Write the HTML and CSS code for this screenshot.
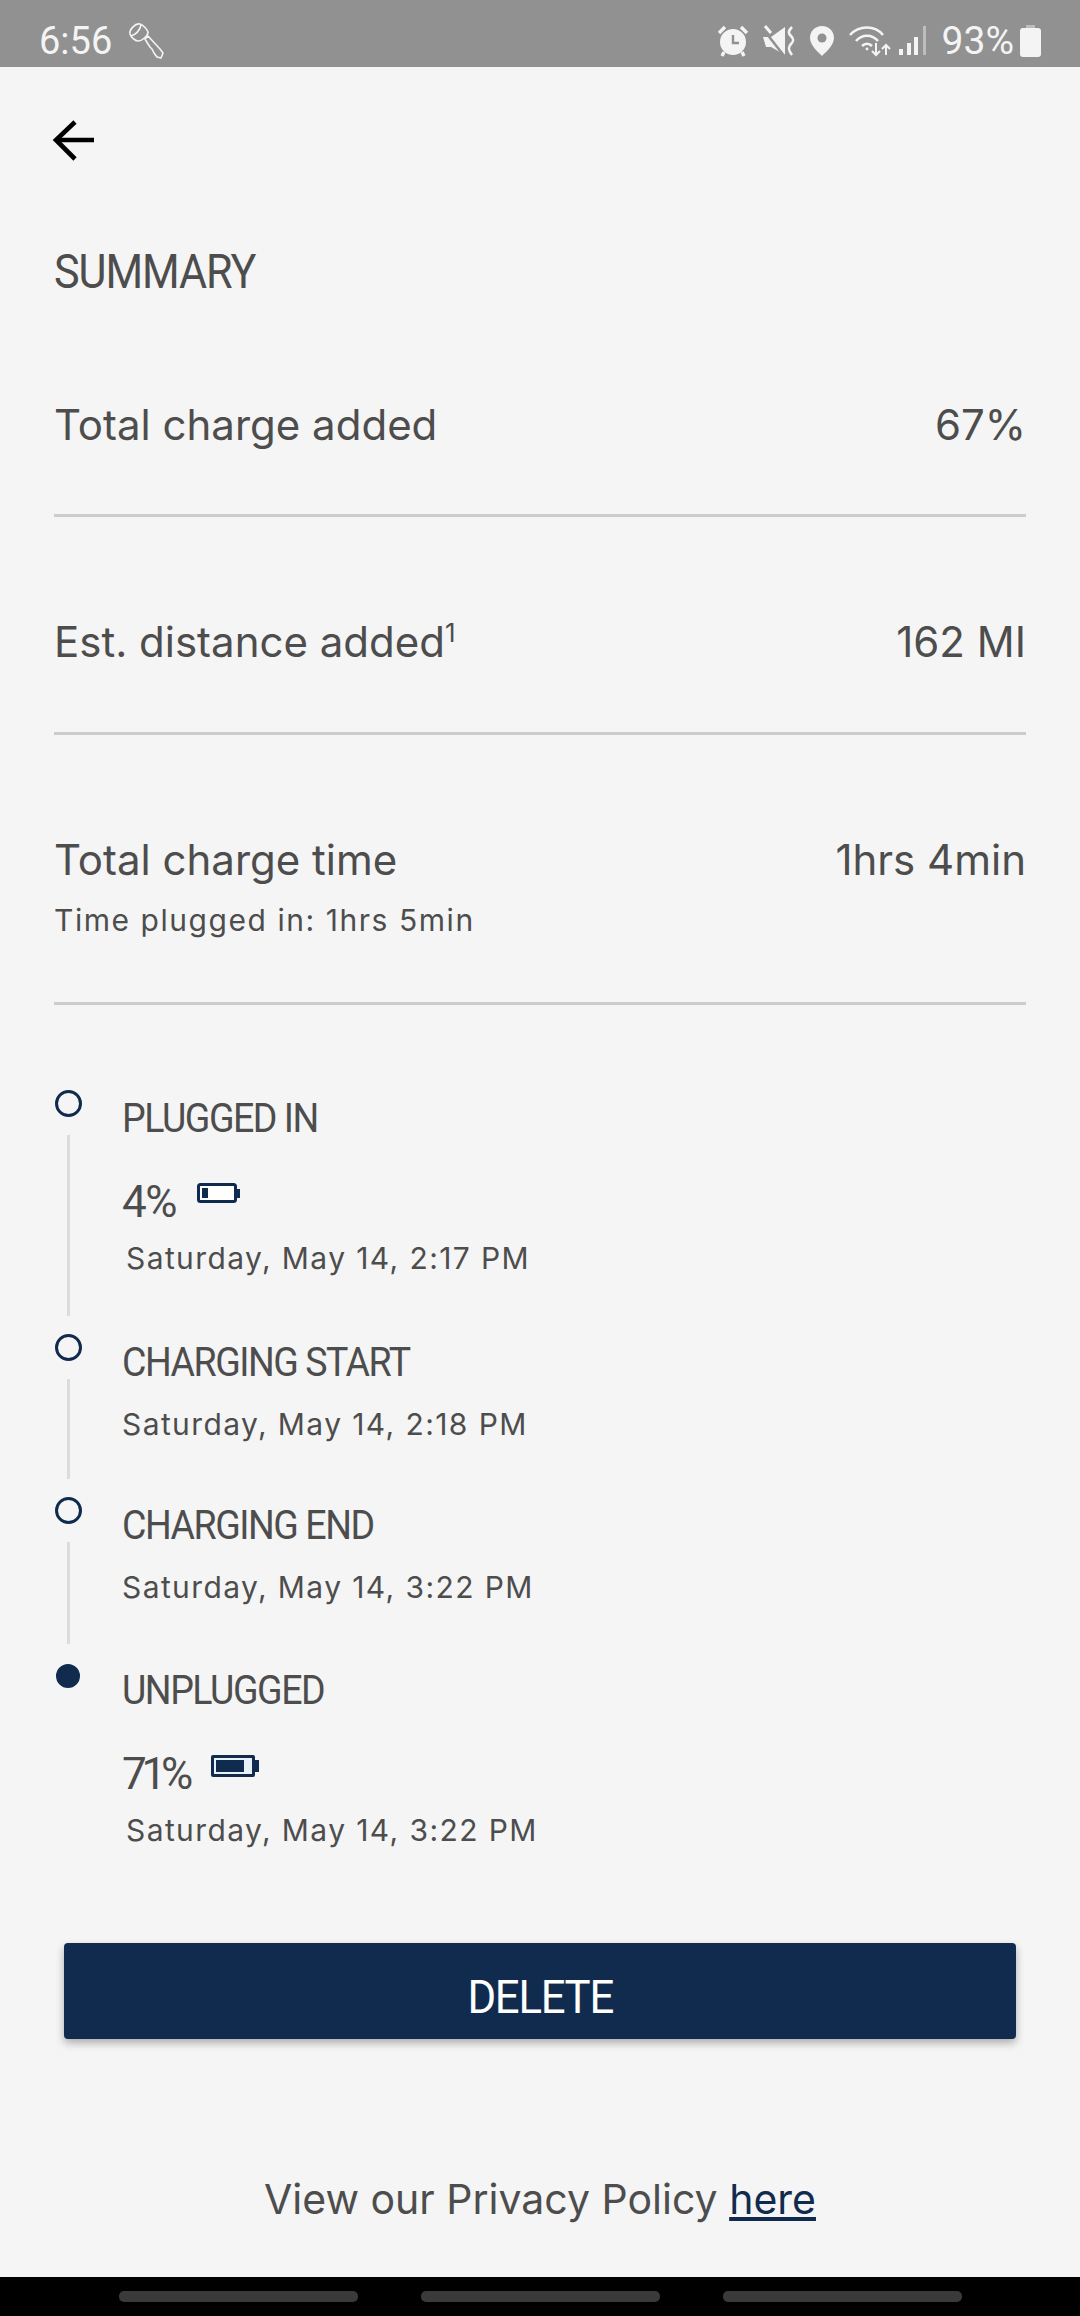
FILE: index.html
```html
<!DOCTYPE html>
<html lang="en">
<head>
    <meta charset="UTF-8">
    <meta name="viewport" content="width=device-width, initial-scale=1.0">
    <title>Charge Summary</title>
    <link rel="stylesheet" href="styles.css">
</head>
<body>
    <div class="status-bar">
        <div class="status-left">
            <span class="status-time">6:56</span>
            <svg class="key-icon" width="38" height="38" viewBox="0 0 38 38" fill="none" stroke="#f4f4f4" stroke-width="1.6" stroke-linejoin="round">
                <path d="M3 12 C2 8 8 1 13 2 C16 3 20 7 21 10 C21 14 15 19 11 19 C8 19 4 15 3 12 Z"/>
                <path d="M4 14 C8 13 13 9 14 3" />
                <path d="M18 17 L21 14 L33 27 L36 31 L34 36 L30 35 L27 31 L25 27 L23 25 L21 22 Z"/>
            </svg>
        </div>
        <div class="status-right">
            <!-- alarm -->
            <svg width="32" height="32" viewBox="0 0 32 32">
                <circle cx="16" cy="17" r="13" fill="#f4f4f4"/>
                <path d="M2 8 L8 2 M30 8 L24 2" stroke="#f4f4f4" stroke-width="3.4"/>
                <path d="M16 10 V18 H22" stroke="#919191" stroke-width="2.4" fill="none"/>
                <path d="M7 27 L5 31 M25 27 L27 31" stroke="#f4f4f4" stroke-width="3.4"/>
            </svg>
            <!-- mute -->
            <svg class="gap-left" width="32" height="32" viewBox="0 0 32 32">
                <path d="M0 12 H8 L22 2 V30 L8 22 H3 Z" fill="#f4f4f4"/>
                <path d="M0 4 L22 32" stroke="#919191" stroke-width="2.6"/>
                <path d="M2 1 L8 8" stroke="#f4f4f4" stroke-width="3"/>
                <path d="M29 2 C25 6 25 8 28 11 C31 14 31 16 28 19 C25 22 25 25 29 30" stroke="#f4f4f4" stroke-width="2.6" fill="none"/>
            </svg>
            <!-- location -->
            <svg class="gap-left" width="26" height="32" viewBox="0 0 26 32">
                <path d="M13 1 C6 1 1 6 1 13 C1 20 9 27 13 31 C17 27 25 20 25 13 C25 6 20 1 13 1 Z" fill="#f4f4f4"/>
                <circle cx="13" cy="13" r="4.5" fill="#919191"/>
            </svg>
            <!-- wifi -->
            <svg class="gap-left" width="42" height="32" viewBox="0 0 42 32" fill="none" stroke="#f4f4f4" stroke-width="2.6">
                <path d="M1 10 C10 0 26 0 34 10"/>
                <path d="M7 16 C13 9 23 9 29 16"/>
                <path d="M13 21 C16 18 20 18 23 21"/>
                <circle cx="18" cy="24" r="1.4" fill="#f4f4f4" stroke="none"/>
                <path d="M27 18 V30 M23 26 L27 30 L31 26 M37 30 V20 M33 24 L37 20 L41 24" stroke-width="2"/>
            </svg>
            <!-- signal -->
            <svg class="signal-icon" width="28" height="32" viewBox="0 0 28 32">
                <rect x="0" y="24" width="4" height="6" fill="#f4f4f4"/>
                <rect x="8" y="18" width="4" height="12" fill="#f4f4f4"/>
                <rect x="15" y="12" width="4" height="18" fill="#f4f4f4"/>
                <rect x="24" y="1" width="3" height="29" fill="#bdbdbd"/>
            </svg>
            <span class="status-pct">93%</span>
            <!-- battery -->
            <svg width="21" height="32" viewBox="0 0 21 32">
                <rect x="6" y="0" width="9" height="4" fill="#bdbdbd"/>
                <rect x="0" y="3" width="21" height="29" rx="3" fill="#f4f4f4"/>
            </svg>
        </div>
    </div>

    <div class="content">
        <svg class="back-icon" width="44" height="44" viewBox="0 0 44 44" fill="none" stroke="#000" stroke-width="4.6">
            <path d="M24 3 L5 21 L24 40"/>
            <path d="M5 21 H43"/>
        </svg>

        <h1 class="summary-title">SUMMARY</h1>

        <div class="summary-row summary-row-first">
            <span>Total charge added</span>
            <span>67%</span>
        </div>
        <div class="summary-row">
            <span>Est. distance added<sup class="footnote">1</sup></span>
            <span>162 MI</span>
        </div>
        <div class="summary-row summary-row-tall">
            <div>
                <span>Total charge time</span>
                <div class="summary-sub">Time plugged in: 1hrs 5min</div>
            </div>
            <span>1hrs 4min</span>
        </div>

        <div class="timeline">
            <div class="step step-plugged">
                <div class="step-marker"><div class="dot"></div><div class="step-line"></div></div>
                <div class="step-body">
                    <div class="step-title">PLUGGED IN</div>
                    <div class="step-level">
                        <span>4%</span>
                        <svg class="level-low" width="44" height="22" viewBox="0 0 44 22">
                            <rect x="1.5" y="1.5" width="37" height="17" rx="2" fill="#fff" stroke="#112b4f" stroke-width="3"/>
                            <rect x="5" y="5" width="6" height="10" fill="#112b4f"/>
                            <rect x="39" y="6" width="4" height="9" fill="#112b4f"/>
                        </svg>
                    </div>
                    <div class="step-date step-date-in">Saturday, May 14, 2:17 PM</div>
                </div>
            </div>
            <div class="step step-start">
                <div class="step-marker"><div class="dot"></div><div class="step-line"></div></div>
                <div class="step-body">
                    <div class="step-title">CHARGING START</div>
                    <div class="step-date">Saturday, May 14, 2:18 PM</div>
                </div>
            </div>
            <div class="step step-end">
                <div class="step-marker"><div class="dot"></div><div class="step-line"></div></div>
                <div class="step-body">
                    <div class="step-title">CHARGING END</div>
                    <div class="step-date">Saturday, May 14, 3:22 PM</div>
                </div>
            </div>
            <div class="step step-last">
                <div class="step-marker"><div class="dot dot-filled"></div></div>
                <div class="step-body">
                    <div class="step-title">UNPLUGGED</div>
                    <div class="step-level">
                        <span class="level-tight">71%</span>
                        <svg class="level-high" width="48" height="24" viewBox="0 0 48 24">
                            <rect x="0" y="0" width="44" height="22" rx="2" fill="#112b4f"/>
                            <rect x="3" y="3" width="38" height="16" fill="#e8f1f8"/>
                            <rect x="5" y="5" width="28" height="12" fill="#112b4f"/>
                            <rect x="44" y="5" width="4" height="12" fill="#112b4f"/>
                        </svg>
                    </div>
                    <div class="step-date step-date-in">Saturday, May 14, 3:22 PM</div>
                </div>
            </div>
        </div>

        <button class="delete-btn"><span class="delete-label">DELETE</span></button>

        <p class="privacy">View our Privacy Policy <a href="#">here</a></p>
    </div>

    <div class="nav-bar">
        <div class="nav-pill"></div>
        <div class="nav-pill"></div>
        <div class="nav-pill"></div>
    </div>
</body>
</html>
```

FILE: styles.css
```css
* {
    box-sizing: border-box;
}
body {
    margin: 0;
    width: 1080px;
    height: 2316px;
    display: flex;
    flex-direction: column;
    overflow: hidden;
    font-family: Inter, Arial, sans-serif;
    background-color: #f5f5f5;
    color: #4d4d4d;
}
.status-bar {
    height: 67px;
    flex-shrink: 0;
    display: flex;
    justify-content: space-between;
    align-items: center;
    padding: 14px 39px 0;
    background-color: #919191;
    color: #f4f4f4;
    font-family: Roboto, Arial, sans-serif;
}
.status-left, .status-right {
    display: flex;
    align-items: center;
}
.status-time {
    font-size: 38px;
}
.key-icon {
    margin-left: 15px;
}
.gap-left {
    margin-left: 14px;
}
.signal-icon {
    margin-left: 8px;
}
.status-pct {
    font-size: 39px;
    margin: 0 6px 0 15px;
}
.content {
    flex: 1;
    padding: 52px 54px 0;
}
.back-icon {
    display: block;
    margin-left: -3px;
}
.summary-title {
    margin: 81px 0 0;
    font-family: Roboto, Arial, sans-serif;
    font-size: 49px;
    font-weight: 400;
    line-height: 56px;
    letter-spacing: -1.2px;
    transform: scaleX(0.88);
    transform-origin: left;
}
.summary-row {
    height: 218px;
    display: flex;
    justify-content: space-between;
    padding-top: 95px;
    border-bottom: 3px solid #cccccc;
    font-size: 42px;
    line-height: 60px;
}
.summary-row-first {
    height: 217px;
    padding-top: 95px;
}
.summary-row-tall {
    height: 270px;
}
.footnote {
    font-size: 26px;
    line-height: 0;
}
.summary-sub {
    margin-top: 10px;
    font-size: 30px;
    line-height: 40px;
    letter-spacing: 1.55px;
}
.timeline {
    margin-top: 85px;
}
.step {
    display: flex;
}
.step-plugged {
    height: 244px;
}
.step-start {
    height: 163px;
}
.step-end {
    height: 165px;
}
.step-last {
    height: 281px;
}
.step-marker {
    width: 68px;
    flex-shrink: 0;
    display: flex;
    flex-direction: column;
    align-items: flex-start;
    padding-left: 1px;
}
.dot {
    width: 27px;
    height: 27px;
    border: 3px solid #112b4f;
    border-radius: 50%;
}
.dot-filled {
    background-color: #112b4f;
    margin-top: 2px;
    width: 24px;
    height: 24px;
    margin-left: 1px;
}
.step-line {
    width: 3px;
    flex: 1;
    margin: 18px 0 18px 12px;
    background-color: #dcdcdc;
}
.step-title {
    margin-top: 3px;
    font-family: Roboto, Arial, sans-serif;
    font-size: 41px;
    line-height: 50px;
    letter-spacing: -1.6px;
    transform: scaleX(0.915);
    transform-origin: left;
}
.step-level {
    display: flex;
    align-items: flex-start;
    margin-top: 35px;
    font-family: Roboto, Arial, sans-serif;
    font-size: 44px;
    line-height: 48px;
    letter-spacing: -1.6px;
}
.level-tight {
    letter-spacing: -5.2px;
}
.level-low {
    margin: 5px 0 0 21px;
}
.level-high {
    margin: 5px 0 0 23px;
}
.step-date {
    margin-top: 17px;
    font-size: 30px;
    line-height: 40px;
    letter-spacing: 1.4px;
}
.step-date-in {
    margin-top: 12px;
    margin-left: 4px;
}
.delete-btn {
    display: block;
    width: 952px;
    height: 96px;
    margin: 0 0 0 10px;
    padding: 10px 0 0;
    border: none;
    border-radius: 4px;
    background-color: #112b4f;
    color: #ffffff;
    font-family: Roboto, Arial, sans-serif;
    font-size: 47px;
    letter-spacing: -1.4px;
    box-shadow: 0 4px 8px rgba(0,0,0,0.3);
}
.delete-label {
    display: inline-block;
    transform: scaleX(0.93);
}
.privacy {
    margin: 132px 0 0;
    text-align: center;
    font-size: 41px;
    line-height: 56px;
}
.privacy a {
    color: #112b4f;
}
.nav-bar {
    height: 39px;
    flex-shrink: 0;
    display: flex;
    justify-content: center;
    gap: 63px;
    padding-top: 14px;
    background-color: #000000;
}
.nav-pill {
    width: 239px;
    height: 11px;
    border-radius: 5px;
    background-color: #3a3a3a;
}
```
